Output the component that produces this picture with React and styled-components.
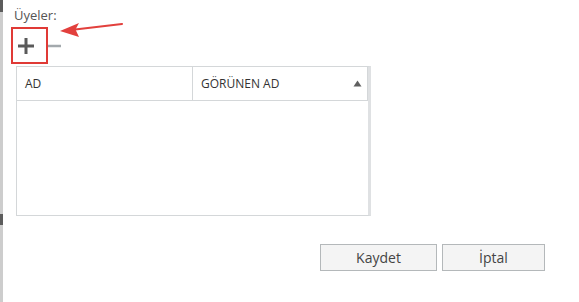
import React from "react";
import styled, { createGlobalStyle } from "styled-components";

const GlobalStyle = createGlobalStyle`
  html, body {
    margin: 0;
    padding: 0;
    background: #ffffff;
  }
  body {
    font-family: "Open Sans", "Noto Sans", sans-serif;
    color: #444;
  }
`;

export default function App() {
  return (
    <>
      <GlobalStyle />
      <Page>
        <EdgeStrip>
          <EdgeMark top={0} height={12} />
          <EdgeMark top={214} height={11} />
        </EdgeStrip>
        <Content>
          <Label>Üyeler:</Label>
          <Toolbar>
            <Highlight>
              <IconButton aria-label="Ekle">
                <PlusIcon />
              </IconButton>
            </Highlight>
            <IconButton aria-label="Kaldır" disabled>
              <MinusIcon />
            </IconButton>
            <Arrow />
          </Toolbar>
          <Table>
            <HeaderRow>
              <HeaderCell width="176px">AD</HeaderCell>
              <HeaderCell grow>
                GÖRÜNEN AD
                <SortUp />
              </HeaderCell>
            </HeaderRow>
            <TableBody />
          </Table>
          <Footer>
            <Button width="117px">Kaydet</Button>
            <Button width="103px">İptal</Button>
          </Footer>
        </Content>
      </Page>
    </>
  );
}

function PlusIcon() {
  return (
    <svg width="18" height="18" viewBox="0 0 18 18">
      <path d="M9 1v16M1 9h16" stroke="#5a5a5a" strokeWidth="3" />
    </svg>
  );
}

function MinusIcon() {
  return (
    <svg width="14" height="18" viewBox="0 0 14 18">
      <path d="M0 9h13" stroke="#a3a9ad" strokeWidth="2.5" />
    </svg>
  );
}

function Arrow() {
  return (
    <ArrowSvg width="70" height="22" viewBox="0 0 70 22">
      <path d="M64 5 L17 10.5" stroke="#e2403d" strokeWidth="2.2" strokeLinecap="round" />
      <path d="M2 12 L21 4 L17.5 10.5 L21 18 Z" fill="#e2403d" />
    </ArrowSvg>
  );
}

function SortUp() {
  return (
    <SortSvg width="9" height="7" viewBox="0 0 9 7">
      <path d="M4.5 0.5 L8.5 6.5 L0.5 6.5 Z" fill="#606060" />
    </SortSvg>
  );
}

const Page = styled.div`
  display: flex;
  height: 302px;
  overflow: hidden;
`;

const EdgeStrip = styled.div`
  position: relative;
  width: 3px;
  flex: none;
  background: #cdcdcd;
`;

const EdgeMark = styled.span`
  position: absolute;
  left: 0;
  top: ${(p) => p.top}px;
  width: 3px;
  height: ${(p) => p.height}px;
  background: #5c5c5c;
`;

const Content = styled.div`
  flex: 1;
  display: flex;
  flex-direction: column;
  padding: 6px 0 0 8px;
`;

const Label = styled.div`
  font-size: 13px;
  line-height: 18px;
  color: #555;
  padding-left: 3px;
`;

const Toolbar = styled.div`
  position: relative;
  display: flex;
  align-items: center;
  margin-top: 3px;
  height: 37px;
`;

const Highlight = styled.div`
  display: flex;
  align-items: center;
  justify-content: flex-start;
  width: 37px;
  height: 37px;
  box-sizing: border-box;
  padding-left: 4px;
  border: 2.5px solid #e03a36;
`;

const IconButton = styled.button`
  display: flex;
  align-items: center;
  justify-content: center;
  padding: 0;
  margin: 0;
  border: none;
  background: none;
  height: 18px;
  cursor: pointer;
  &:disabled {
    cursor: default;
  }
`;

const ArrowSvg = styled.svg`
  position: absolute;
  left: 47px;
  top: -8px;
`;

const Table = styled.div`
  display: flex;
  flex-direction: column;
  width: 355px;
  height: 150px;
  margin: 2px 0 0 5px;
  box-sizing: border-box;
  border: 1px solid #d4d7d9;
  border-right-width: 3px;
  border-right-color: #dfe1e3;
`;

const HeaderRow = styled.div`
  display: flex;
  height: 33px;
  flex: none;
  border-bottom: 1px solid #d4d7d9;
`;

const HeaderCell = styled.div`
  display: flex;
  align-items: center;
  box-sizing: border-box;
  width: ${(p) => p.width || "auto"};
  flex: ${(p) => (p.grow ? 1 : "none")};
  padding: 0 8px;
  font-size: 12px;
  color: #333;
  border-right: 1px solid #d4d7d9;
`;

const SortSvg = styled.svg`
  margin-left: auto;
  margin-right: -3px;
`;

const TableBody = styled.div`
  flex: 1;
`;

const Footer = styled.div`
  display: flex;
  justify-content: flex-end;
  gap: 5px;
  margin-top: 28px;
  padding-right: 34px;
`;

const Button = styled.button`
  width: ${(p) => p.width};
  height: 27px;
  box-sizing: border-box;
  border: 1.5px solid #b4b8ba;
  background: #f4f4f4;
  font-family: "Open Sans", "Noto Sans", sans-serif;
  font-size: 14px;
  color: #444;
  padding: 0;
  cursor: pointer;
`;
